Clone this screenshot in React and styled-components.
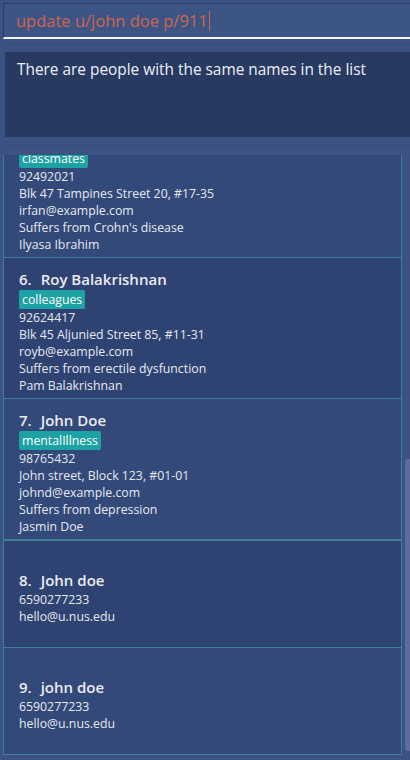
import React from "react";
import styled, { createGlobalStyle } from "styled-components";

const GlobalStyle = createGlobalStyle`
  html, body {
    margin: 0;
    padding: 0;
    height: 760px;
    overflow: hidden;
    background: #3c5282;
  }
  body {
    font-family: "Open Sans", "Noto Sans", sans-serif;
  }
  * { box-sizing: border-box; }
`;

const Page = styled.div`
  height: 760px;
  display: flex;
  flex-direction: column;
  padding-top: 3px;
  padding-left: 3px;
  padding-bottom: 5px;
`;

const CommandBox = styled.div`
  height: 36px;
  display: flex;
  align-items: center;
  padding-left: 12px;
  background: #3d5585;
  border-top: 1px solid #2c3d69;
  border-left: 1px solid #2c3d69;
  border-bottom: 2px solid #f4f6fa;
`;

const CommandText = styled.span`
  font-size: 16.5px;
  color: #d0644f;
  white-space: pre;
`;

const Caret = styled.span`
  width: 1px;
  height: 20px;
  margin-left: 1px;
  background: #d0644f;
`;

const Divider = styled.div`
  height: 1px;
  margin-top: ${(p) => p.$gap}px;
  background: #37497a;
`;

const ResultBox = styled.div`
  height: 87px;
  margin-top: 6px;
  margin-left: 1px;
  padding: 7px 0 0 12px;
  background: #283962;
  border: 1px solid #36507f;
  border-right: none;
  color: #eef1f7;
  font-size: 15.4px;
`;

const ListPanel = styled.div`
  flex: 1;
  min-height: 0;
  margin-top: 9px;
  display: flex;
`;

const CardList = styled.div`
  width: 400px;
  display: flex;
  flex-direction: column;
  justify-content: flex-end;
  overflow: hidden;
  border-left: 1px solid #3e8098;
  border-right: 1px solid #3e8098;
`;

const Card = styled.div`
  flex-shrink: 0;
  min-height: 107px;
  display: flex;
  flex-direction: column;
  justify-content: center;
  padding: 10px 15px 4px;
  background: ${(p) => (p.$odd ? "#33497a" : "#2f4373")};
  border-bottom: ${(p) => (p.$thick ? 2 : 1)}px solid #3e8098;
`;

const NameRow = styled.div`
  display: flex;
  gap: 9px;
  height: 22px;
  align-items: center;
  font-size: 15px;
  font-weight: 600;
  color: #e9ebf1;
`;

const Tags = styled.div`
  display: flex;
  gap: 4px;
  height: 19px;
`;

const Tag = styled.span`
  height: 19px;
  line-height: 19px;
  padding: 0 3px;
  border-radius: 2px;
  background: #1da2a4;
  color: #ffffff;
  font-size: 12.3px;
`;

const Detail = styled.div`
  height: 17px;
  line-height: 17px;
  font-size: 12.3px;
  color: #e6e9f0;
  white-space: nowrap;
`;

const ScrollTrack = styled.div`
  flex: 1;
  display: flex;
  flex-direction: column;
  padding-left: 3px;
`;

const Thumb = styled.div`
  margin-top: 304px;
  height: 292px;
  width: 5px;
  border-radius: 3px 0 0 3px;
  background: #5b6c9d;
`;

const people = [
  {
    id: 5,
    name: "Irfan Ibrahim",
    tags: ["classmates"],
    details: [
      "92492021",
      "Blk 47 Tampines Street 20, #17-35",
      "irfan@example.com",
      "Suffers from Crohn's disease",
      "Ilyasa Ibrahim",
    ],
  },
  {
    id: 6,
    name: "Roy Balakrishnan",
    tags: ["colleagues"],
    details: [
      "92624417",
      "Blk 45 Aljunied Street 85, #11-31",
      "royb@example.com",
      "Suffers from erectile dysfunction",
      "Pam Balakrishnan",
    ],
  },
  {
    id: 7,
    name: "John Doe",
    tags: ["mentalIllness"],
    details: [
      "98765432",
      "John street, Block 123, #01-01",
      "johnd@example.com",
      "Suffers from depression",
      "Jasmin Doe",
    ],
  },
  {
    id: 8,
    name: "John doe",
    tags: [],
    details: ["6590277233", "hello@u.nus.edu"],
  },
  {
    id: 9,
    name: "john doe",
    tags: [],
    details: ["6590277233", "hello@u.nus.edu"],
  },
];

export default function App() {
  return (
    <>
      <GlobalStyle />
      <Page>
        <CommandBox>
          <CommandText>update u/john doe p/911</CommandText>
          <Caret />
        </CommandBox>
        <Divider $gap={5} />
        <ResultBox>There are people with the same names in the list</ResultBox>
        <Divider $gap={7} />
        <ListPanel>
          <CardList>
            {people.map((p) => (
              <Card key={p.id} $odd={p.id % 2 === 1} $thick={p.id === 7}>
                <NameRow>
                  <span>{p.id}.</span>
                  <span>{p.name}</span>
                </NameRow>
                {p.tags.length > 0 && (
                  <Tags>
                    {p.tags.map((t) => (
                      <Tag key={t}>{t}</Tag>
                    ))}
                  </Tags>
                )}
                {p.details.map((d, i) => (
                  <Detail key={i}>{d}</Detail>
                ))}
              </Card>
            ))}
          </CardList>
          <ScrollTrack>
            <Thumb />
          </ScrollTrack>
        </ListPanel>
      </Page>
    </>
  );
}
